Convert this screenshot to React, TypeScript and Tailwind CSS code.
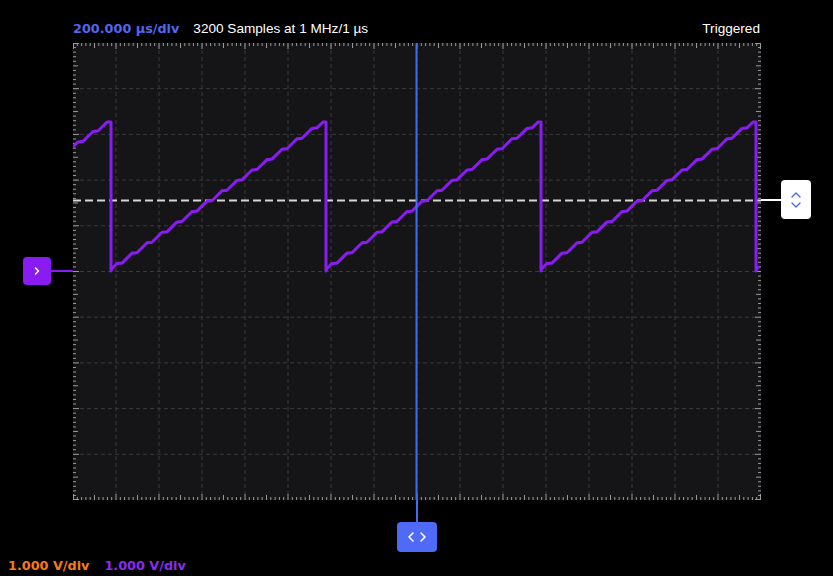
import React from "react";

const W = 688;
const H = 457;
const COLS = 16;
const ROWS = 10;
const DX = W / COLS;
const DY = H / ROWS;

const BOLD_FONT = { fontFamily: '"DejaVu Sans", "Liberation Sans", sans-serif' };

// Sawtooth trace with a small stair-step ripple on each ramp
function buildTrace(): string {
  const drops = [38, 253, 468, 683];
  const hi = 79;
  const lo = 228;
  const period = 215;
  const slope = (lo - hi) / period;
  const ripple = (t: number) => {
    const m = t % 15;
    return m < 10 ? -(m / 10) * 3 : -3 + ((m - 10) / 5) * 3;
  };
  const pts: string[] = [];
  let start = 0;
  let startY = hi + drops[0] * slope;
  for (let d = 0; d <= drops.length; d++) {
    const end = d < drops.length ? drops[d] : 686;
    for (let x = start; x <= end; x += 1) {
      const base = startY - (x - start) * slope;
      const y = Math.max(hi, base + ripple(x - start + 5));
      pts.push(`${x.toFixed(1)},${y.toFixed(1)}`);
    }
    if (d < drops.length) {
      pts.push(`${end},${hi}`);
      pts.push(`${end},${lo}`);
      start = end + 1;
      startY = lo - 1;
    }
  }
  return pts.join(" ");
}

function Plot() {
  const vLines = Array.from({ length: COLS - 1 }, (_, i) => (i + 1) * DX);
  const hLines = Array.from({ length: ROWS - 1 }, (_, i) => (i + 1) * DY);
  const xTicks = Array.from({ length: COLS * 10 + 1 }, (_, i) => i);
  const yTicks = Array.from({ length: ROWS * 10 + 1 }, (_, i) => i);
  const tickLen = (i: number) => (i % 10 === 0 ? 6 : i % 5 === 0 ? 5 : 3);
  return (
    <svg width={W} height={H} className="block">
      <rect x={0} y={0} width={W} height={H} fill="#151518" />
      {vLines.map((x) => (
        <line key={`v${x}`} x1={x} y1={0} x2={x} y2={H} stroke="#3a3a3d" strokeWidth={1} strokeDasharray="4 3" />
      ))}
      {hLines.map((y) => (
        <line key={`h${y}`} x1={0} y1={y} x2={W} y2={y} stroke="#3a3a3d" strokeWidth={1} strokeDasharray="4 3" />
      ))}
      {xTicks.map((i) => {
        const x = Math.min(W - 0.5, Math.max(0.5, (i * DX) / 10));
        const l = tickLen(i);
        return (
          <g key={`xt${i}`} stroke="#9a9a9a" strokeWidth={1}>
            <line x1={x} y1={0} x2={x} y2={l} />
            <line x1={x} y1={H} x2={x} y2={H - l} />
          </g>
        );
      })}
      {yTicks.map((i) => {
        const y = Math.min(H - 0.5, Math.max(0.5, (i * DY) / 10));
        const l = tickLen(i);
        return (
          <g key={`yt${i}`} stroke="#9a9a9a" strokeWidth={1}>
            <line x1={0} y1={y} x2={l} y2={y} />
            <line x1={W} y1={y} x2={W - l} y2={y} />
          </g>
        );
      })}
      <line x1={0} y1={157.5} x2={W} y2={157.5} stroke="#d6d6d6" strokeWidth={2} strokeDasharray="8 4" />
      <polyline points={buildTrace()} fill="none" stroke="#8a1cf2" strokeWidth={3} strokeLinejoin="round" />
      <line x1={343.5} y1={0} x2={343.5} y2={H} stroke="#3d6cf5" strokeWidth={2} />
    </svg>
  );
}

export default function App() {
  return (
    <div
      className="w-[833px] h-[576px] bg-black text-white flex flex-col overflow-hidden"
      style={{ fontFamily: '"Liberation Sans", Arial, sans-serif' }}
    >
      <div className="h-[43px] pt-[19px] px-[73px] flex justify-between text-[13.6px] leading-[20px]">
        <div className="flex gap-[14px]">
          <span className="font-bold text-[12.8px] text-[#5366f2]" style={BOLD_FONT}>
            200.000 µs/div
          </span>
          <span className="text-white">3200 Samples at 1 MHz/1 µs</span>
        </div>
        <span className="text-white">Triggered</span>
      </div>

      <div className="relative flex h-[457px]">
        <div className="w-[73px] shrink-0" />
        <Plot />
        <div className="w-[72px] shrink-0" />

        {/* channel offset marker */}
        <div className="absolute left-[23px] top-[214px] flex items-center">
          <div className="w-[28px] h-[28px] rounded-[4px] bg-[#8a1cf2] flex items-center justify-center">
            <svg width="10" height="10" viewBox="0 0 10 10">
              <path d="M3.5 2 L6.5 5 L3.5 8" fill="none" stroke="#fff" strokeWidth="1.6" strokeLinecap="round" strokeLinejoin="round" />
            </svg>
          </div>
          <div className="w-[22px] h-[2px] bg-[#8a1cf2]" />
        </div>

        {/* trigger level marker */}
        <div className="absolute left-[761px] top-[137px] flex items-center">
          <div className="w-[20px] h-[2px] bg-white" />
          <div className="w-[30px] h-[39px] rounded-[4px] bg-white flex items-center justify-center">
            <svg width="14" height="22" viewBox="0 0 14 22">
              <path d="M3 8 L7 4 L11 8" fill="none" stroke="#5366f2" strokeWidth="1.4" strokeLinecap="round" strokeLinejoin="round" />
              <path d="M3 14 L7 18 L11 14" fill="none" stroke="#5366f2" strokeWidth="1.4" strokeLinecap="round" strokeLinejoin="round" />
            </svg>
          </div>
        </div>
      </div>

      <div className="flex flex-col items-center pl-[1px]">
        <div className="w-[2px] h-[22px] bg-[#3d6cf5]" />
        <div className="w-[40px] h-[30px] rounded-[4px] bg-[#4f6af6] flex items-center justify-center">
          <svg width="22" height="12" viewBox="0 0 22 12">
            <path d="M7 2 L3 6 L7 10" fill="none" stroke="#fff" strokeWidth="1.6" strokeLinecap="round" strokeLinejoin="round" />
            <path d="M15 2 L19 6 L15 10" fill="none" stroke="#fff" strokeWidth="1.6" strokeLinecap="round" strokeLinejoin="round" />
          </svg>
        </div>
      </div>

      <div className="mt-[4px] pl-[8px] flex gap-[15px] text-[12.8px] leading-[20px] font-bold" style={BOLD_FONT}>
        <span className="text-[#f57a1a]">1.000 V/div</span>
        <span className="text-[#8a2cf0]">1.000 V/div</span>
      </div>
    </div>
  );
}
